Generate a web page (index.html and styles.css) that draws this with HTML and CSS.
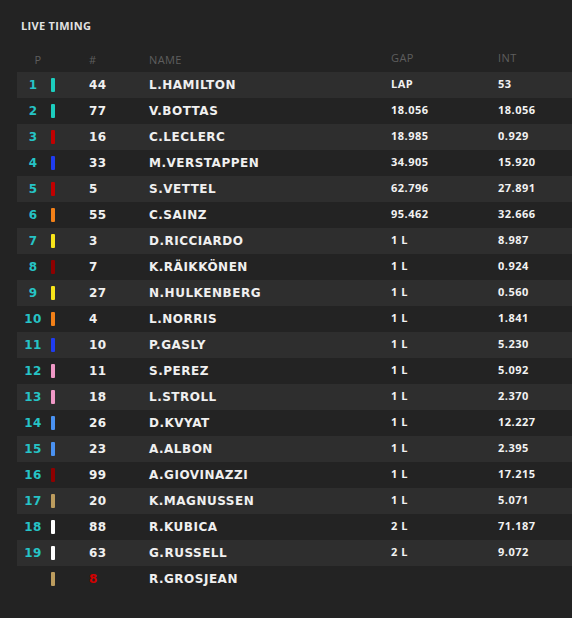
FILE: index.html
```html
<!DOCTYPE html>
<html>
<head>
<meta charset="utf-8">
<link rel="stylesheet" href="styles.css">
</head>
<body>
<main class="timing">
  <h1 class="title">LIVE TIMING</h1>
  <div class="table">
    <div class="row head">
      <div class="c-pos">P</div><div></div><div class="c-num">#</div><div class="c-name">NAME</div><div class="c-gap">GAP</div><div class="c-int">INT</div>
    </div>
    <div class="row"><div class="c-pos">1</div><div class="c-bar"><span class="bar mer"></span></div><div class="c-num">44</div><div class="c-name">L.HAMILTON</div><div class="c-gap">LAP</div><div class="c-int">53</div></div>
    <div class="row"><div class="c-pos">2</div><div class="c-bar"><span class="bar mer"></span></div><div class="c-num">77</div><div class="c-name">V.BOTTAS</div><div class="c-gap">18.056</div><div class="c-int">18.056</div></div>
    <div class="row"><div class="c-pos">3</div><div class="c-bar"><span class="bar fer"></span></div><div class="c-num">16</div><div class="c-name">C.LECLERC</div><div class="c-gap">18.985</div><div class="c-int">0.929</div></div>
    <div class="row"><div class="c-pos">4</div><div class="c-bar"><span class="bar rbr"></span></div><div class="c-num">33</div><div class="c-name">M.VERSTAPPEN</div><div class="c-gap">34.905</div><div class="c-int">15.920</div></div>
    <div class="row"><div class="c-pos">5</div><div class="c-bar"><span class="bar fer"></span></div><div class="c-num">5</div><div class="c-name">S.VETTEL</div><div class="c-gap">62.796</div><div class="c-int">27.891</div></div>
    <div class="row"><div class="c-pos">6</div><div class="c-bar"><span class="bar mcl"></span></div><div class="c-num">55</div><div class="c-name">C.SAINZ</div><div class="c-gap">95.462</div><div class="c-int">32.666</div></div>
    <div class="row"><div class="c-pos">7</div><div class="c-bar"><span class="bar ren"></span></div><div class="c-num">3</div><div class="c-name">D.RICCIARDO</div><div class="c-gap">1 L</div><div class="c-int">8.987</div></div>
    <div class="row"><div class="c-pos">8</div><div class="c-bar"><span class="bar alf"></span></div><div class="c-num">7</div><div class="c-name">K.RÄIKKÖNEN</div><div class="c-gap">1 L</div><div class="c-int">0.924</div></div>
    <div class="row"><div class="c-pos">9</div><div class="c-bar"><span class="bar ren"></span></div><div class="c-num">27</div><div class="c-name">N.HULKENBERG</div><div class="c-gap">1 L</div><div class="c-int">0.560</div></div>
    <div class="row"><div class="c-pos">10</div><div class="c-bar"><span class="bar mcl"></span></div><div class="c-num">4</div><div class="c-name">L.NORRIS</div><div class="c-gap">1 L</div><div class="c-int">1.841</div></div>
    <div class="row"><div class="c-pos">11</div><div class="c-bar"><span class="bar rbr"></span></div><div class="c-num">10</div><div class="c-name">P.GASLY</div><div class="c-gap">1 L</div><div class="c-int">5.230</div></div>
    <div class="row"><div class="c-pos">12</div><div class="c-bar"><span class="bar rp"></span></div><div class="c-num">11</div><div class="c-name">S.PEREZ</div><div class="c-gap">1 L</div><div class="c-int">5.092</div></div>
    <div class="row"><div class="c-pos">13</div><div class="c-bar"><span class="bar rp"></span></div><div class="c-num">18</div><div class="c-name">L.STROLL</div><div class="c-gap">1 L</div><div class="c-int">2.370</div></div>
    <div class="row"><div class="c-pos">14</div><div class="c-bar"><span class="bar tr"></span></div><div class="c-num">26</div><div class="c-name">D.KVYAT</div><div class="c-gap">1 L</div><div class="c-int">12.227</div></div>
    <div class="row"><div class="c-pos">15</div><div class="c-bar"><span class="bar tr"></span></div><div class="c-num">23</div><div class="c-name">A.ALBON</div><div class="c-gap">1 L</div><div class="c-int">2.395</div></div>
    <div class="row"><div class="c-pos">16</div><div class="c-bar"><span class="bar alf"></span></div><div class="c-num">99</div><div class="c-name">A.GIOVINAZZI</div><div class="c-gap">1 L</div><div class="c-int">17.215</div></div>
    <div class="row"><div class="c-pos">17</div><div class="c-bar"><span class="bar has"></span></div><div class="c-num">20</div><div class="c-name">K.MAGNUSSEN</div><div class="c-gap">1 L</div><div class="c-int">5.071</div></div>
    <div class="row"><div class="c-pos">18</div><div class="c-bar"><span class="bar wil"></span></div><div class="c-num">88</div><div class="c-name">R.KUBICA</div><div class="c-gap">2 L</div><div class="c-int">71.187</div></div>
    <div class="row"><div class="c-pos">19</div><div class="c-bar"><span class="bar wil"></span></div><div class="c-num">63</div><div class="c-name">G.RUSSELL</div><div class="c-gap">2 L</div><div class="c-int">9.072</div></div>
    <div class="row out"><div class="c-pos"></div><div class="c-bar"><span class="bar has"></span></div><div class="c-num">8</div><div class="c-name">R.GROSJEAN</div><div class="c-gap"></div><div class="c-int"></div></div>
  </div>
</main>
</body>
</html>
```

FILE: styles.css
```css
html, body {
  margin: 0;
  padding: 0;
  background: #232323;
}
.timing {
  padding-top: 19px;
  font-family: "DejaVu Sans", sans-serif;
  color: #f0f0f0;
}
.title {
  margin: 0 0 13px 21px;
  font-family: "Open Sans", sans-serif;
  font-weight: 700;
  font-size: 11px;
  line-height: 14px;
  letter-spacing: 0.3px;
  color: #e2e2e2;
}
.table {
  margin-left: 17px;
}
.row {
  display: grid;
  grid-template-columns: 32px 40px 60px 242px 107px 1fr;
  align-items: center;
  height: 26px;
}
.row:nth-child(even) {
  background: #2e2e2e;
}
.row.out {
  background: transparent;
}
.c-pos {
  text-align: center;
  font-weight: bold;
  font-size: 12px;
  letter-spacing: 0.3px;
  color: #26c4c6;
}
.c-bar {
  display: flex;
  align-items: center;
  padding-left: 2px;
}
.bar {
  display: block;
  width: 4px;
  height: 14px;
  border-radius: 1px;
}
.mer { background: #1ccdbe; }
.fer { background: #c10000; }
.rbr { background: #1f3cf0; }
.mcl { background: #f28018; }
.ren { background: #f7e41a; }
.alf { background: #8e0000; }
.rp  { background: #ef98c6; }
.tr  { background: #4a92f2; }
.has { background: #bc9c5e; }
.wil { background: #ffffff; }
.c-num, .c-name {
  font-weight: bold;
  font-size: 12px;
  letter-spacing: 0.5px;
  color: #f0f0f0;
}
.out .c-num {
  color: #d40000;
}
.c-gap, .c-int {
  font-family: "Open Sans", sans-serif;
  font-weight: 700;
  font-size: 11px;
  line-height: 14px;
  padding-bottom: 2px;
  letter-spacing: 0.5px;
  color: #f2f2f2;
}
.head .c-pos, .head .c-num, .head .c-name, .head .c-gap, .head .c-int {
  font-family: "Open Sans", sans-serif;
  font-weight: 400;
  font-size: 11px;
  letter-spacing: 0.4px;
  color: #5e5e5e;
}
.row.head {
  background: transparent;
}
.head .c-pos {
  padding-left: 10px;
}
```
